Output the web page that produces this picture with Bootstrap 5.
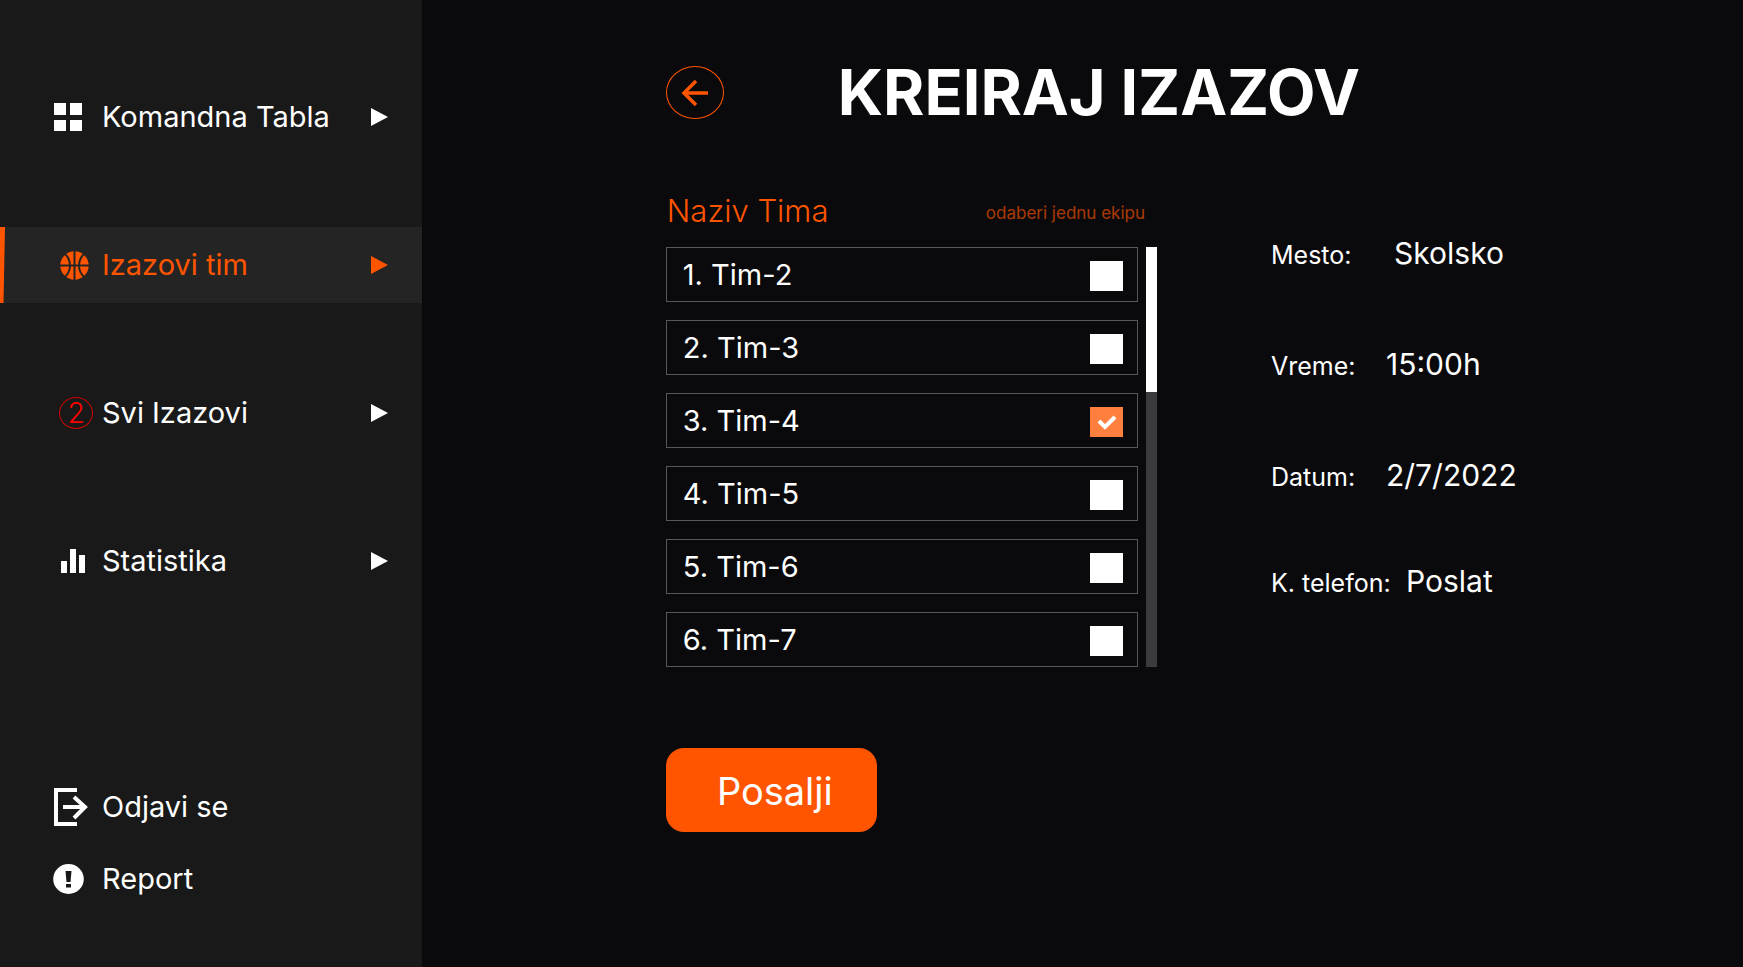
<!DOCTYPE html>
<html lang="sr-Latn">
<head>
<meta charset="utf-8">
<meta name="viewport" content="width=device-width, initial-scale=1">
<title>Kreiraj izazov</title>
<link href="https://cdn.jsdelivr.net/npm/bootstrap@5.3.0/dist/css/bootstrap.min.css" rel="stylesheet">
<style>
:root { --accent: #ff5500; --side: #191919; --page: #0a0a0c; }
body { background: var(--page); color: #fff; font-family: Inter, "Open Sans", sans-serif; font-weight: 400; }
svg { display: block; flex: none; }

.side-panel { flex: 0 0 24.2%; background: var(--side); padding: 79px 0 52px; }
.side-nav { gap: 72px; }
.side-link { height: 76px; padding: 0 34px 0 53px; gap: 9px; color: #fff; font-size: 29px; line-height: 36px; text-decoration: none; white-space: nowrap; }
.side-foot .side-link { height: 72px; }
.side-link.active { background: #242424; color: var(--accent); position: relative; }
.side-link.active::before { content: ""; position: absolute; inset: 0 auto 0 0; width: 5px; background: var(--accent); clip-path: polygon(0 0, 100% 0, 70% 100%, 0 100%); }
.icon-slot { width: 40px; flex: none; }
.count-ring { width: 34px; height: 32px; border: 1px solid #d40000; border-radius: 50%; color: #f00; font-size: 28px; line-height: 30px; font-weight: 300; }

.main-panel { padding: 66px 0 48px 14%; min-width: 0; }
.back-btn { width: 58px; height: 53px; border: 1px solid var(--accent); border-radius: 50%; background: none; color: var(--accent); }
.head-row { gap: 114px; }
.page-title { font-size: 63px; line-height: 53px; font-weight: 700; white-space: nowrap; }
.body-row { margin-top: 72px; gap: 114px; }
.team-col { flex: 0 0 45.6%; }
.team-head { height: 56px; padding: 0 12px 0 1px; line-height: 40px; color: var(--accent); }
.team-head h2 { font-size: 31px; line-height: 40px; font-weight: 300; }
.team-hint { font-size: 17px; line-height: 44px; opacity: .65; }
.team-list { gap: 18px; }
.team-row { height: 55px; border: 1px solid #58585a; padding: 0 14px 0 16px; font-size: 29px; line-height: 50px; }
.team-row .form-check-input { width: 33px; height: 30px; margin: 2px 0 0; border: 0; border-radius: 0; background-color: #fff; }
.team-row .form-check-input:checked { background-color: #ff7f3f; background-size: 28px 28px; background-image: url("data:image/svg+xml,%3csvg xmlns='http://www.w3.org/2000/svg' viewBox='0 0 28 28'%3e%3cpath d='M6 13l6 6L22 9' fill='none' stroke='%23fff' stroke-width='4'/%3e%3c/svg%3e"); }
.scroll-track { width: 11px; background: #3b3b3d; }
.scroll-thumb { height: 145px; background: #fff; }
.send-btn { width: 211px; height: 84px; margin-top: 81px; padding: 2px 0 0 7px; border: 0; border-radius: 18px; background: var(--accent); color: #fff; font-size: 38px; font-weight: 400; }
.info-list { padding-top: 42px; font-size: 30px; line-height: 40px; white-space: nowrap; }
.info-row { height: 111px; }
.info-row:nth-child(3) { height: 106px; }
.info-list dt { min-width: 115px; font-size: 25px; font-weight: 400; }
.info-list .mid-label { min-width: 123px; }
.info-list .wide-label { min-width: 135px; }
</style>
</head>
<body>
<div class="d-flex min-vh-100">
  <aside class="side-panel d-flex flex-column justify-content-between">
    <nav class="side-nav d-flex flex-column">
      <a href="#" class="side-link d-flex align-items-center">
        <span class="icon-slot"><svg width="30" height="30" viewBox="0 0 30 30" fill="#fff"><path d="M1 1h12v12H1zM17 1h12v12H17zM1 18h12v11H1zM17 18h12v11H17z"/></svg></span>
        <span>Komandna Tabla</span>
        <svg class="ms-auto" width="17" height="18" viewBox="0 0 17 18"><path d="M0 0l17 9-17 9z" fill="currentColor"/></svg>
      </a>
      <a href="#" class="side-link active d-flex align-items-center" aria-current="page">
        <span class="icon-slot d-flex justify-content-end pe-1"><svg width="29" height="29" viewBox="0 0 29 29"><circle cx="14.500" cy="14.500" r="14.200" fill="currentColor"/><path d="M14.500 0v29M0 14.500h29M4.500 2.500q5.500 5 5.500 12t-5.500 12M24.500 2.500q-5.500 5-5.500 12t5.500 12" fill="none" stroke="#242424" stroke-width="2"/></svg></span>
        <span>Izazovi tim</span>
        <svg class="ms-auto" width="17" height="18" viewBox="0 0 17 18"><path d="M0 0l17 9-17 9z" fill="currentColor"/></svg>
      </a>
      <a href="#" class="side-link d-flex align-items-center">
        <span class="icon-slot d-flex justify-content-end"><span class="count-ring d-flex justify-content-center">2</span></span>
        <span>Svi Izazovi</span>
        <svg class="ms-auto" width="17" height="18" viewBox="0 0 17 18"><path d="M0 0l17 9-17 9z" fill="currentColor"/></svg>
      </a>
      <a href="#" class="side-link d-flex align-items-center">
        <span class="icon-slot d-flex justify-content-center"><svg width="24" height="24" viewBox="0 0 24 24" fill="#fff"><path d="M0 12h6v12H0zM9 0h6v24H9zM18 6h6v18h-6z"/></svg></span>
        <span>Statistika</span>
        <svg class="ms-auto" width="17" height="18" viewBox="0 0 17 18"><path d="M0 0l17 9-17 9z" fill="currentColor"/></svg>
      </a>
    </nav>
    <div class="side-foot d-flex flex-column">
      <a href="#" class="side-link d-flex align-items-center">
        <span class="icon-slot"><svg width="36" height="38" viewBox="0 0 36 38" fill="none" stroke="#fff" stroke-width="4"><path d="M24 2H3v34h21M10 19h22M21 9l11 10-11 11"/></svg></span>
        <span>Odjavi se</span>
      </a>
      <a href="#" class="side-link d-flex align-items-center">
        <span class="icon-slot"><svg width="31" height="30" viewBox="0 0 31 30"><ellipse cx="15.500" cy="15" rx="15.300" ry="15" fill="#fff"/><path d="M12.500 7h6l-1 11h-4zM13 20h5v3.500h-5z" fill="#191919"/></svg></span>
        <span>Report</span>
      </a>
    </div>
  </aside>

  <main class="main-panel flex-grow-1">
    <header class="head-row d-flex align-items-center">
      <button type="button" class="back-btn d-flex align-items-center justify-content-center p-0" aria-label="Nazad">
        <svg width="27" height="26" viewBox="0 0 27 26" fill="none" stroke="currentColor" stroke-width="3.500"><path d="M27 13H3M15 1L3 13l12 12"/></svg>
      </button>
      <h1 class="page-title mb-0">KREIRAJ IZAZOV</h1>
    </header>
    <form>
      <div class="body-row d-flex">
        <section class="team-col">
          <div class="team-head d-flex justify-content-between">
            <h2 class="mb-0">Naziv Tima</h2>
            <span class="team-hint">odaberi jednu ekipu</span>
          </div>
          <div class="d-flex justify-content-between">
            <div class="team-list d-flex flex-column flex-grow-1 me-2">
              <div class="team-row d-flex align-items-center"><label class="flex-grow-1" for="t1">1. Tim-2</label><input class="form-check-input" type="checkbox" id="t1"></div>
              <div class="team-row d-flex align-items-center"><label class="flex-grow-1" for="t2">2. Tim-3</label><input class="form-check-input" type="checkbox" id="t2"></div>
              <div class="team-row d-flex align-items-center"><label class="flex-grow-1" for="t3">3. Tim-4</label><input class="form-check-input" type="checkbox" id="t3" checked></div>
              <div class="team-row d-flex align-items-center"><label class="flex-grow-1" for="t4">4. Tim-5</label><input class="form-check-input" type="checkbox" id="t4"></div>
              <div class="team-row d-flex align-items-center"><label class="flex-grow-1" for="t5">5. Tim-6</label><input class="form-check-input" type="checkbox" id="t5"></div>
              <div class="team-row d-flex align-items-center"><label class="flex-grow-1" for="t6">6. Tim-7</label><input class="form-check-input" type="checkbox" id="t6"></div>
            </div>
            <div class="scroll-track"><div class="scroll-thumb"></div></div>
          </div>
        </section>
        <dl class="info-list d-flex flex-column mb-0">
          <div class="info-row d-flex align-items-baseline"><dt class="mid-label">Mesto:</dt><dd class="mb-0">Skolsko</dd></div>
          <div class="info-row d-flex align-items-baseline"><dt>Vreme:</dt><dd class="mb-0">15:00h</dd></div>
          <div class="info-row d-flex align-items-baseline"><dt>Datum:</dt><dd class="mb-0">2/7/2022</dd></div>
          <div class="d-flex align-items-baseline"><dt class="wide-label">K. telefon:</dt><dd class="mb-0">Poslat</dd></div>
        </dl>
      </div>
      <button type="submit" class="send-btn">Posalji</button>
    </form>
  </main>
</div>
<script src="https://cdn.jsdelivr.net/npm/bootstrap@5.3.0/dist/js/bootstrap.bundle.min.js"></script>
</body>
</html>
